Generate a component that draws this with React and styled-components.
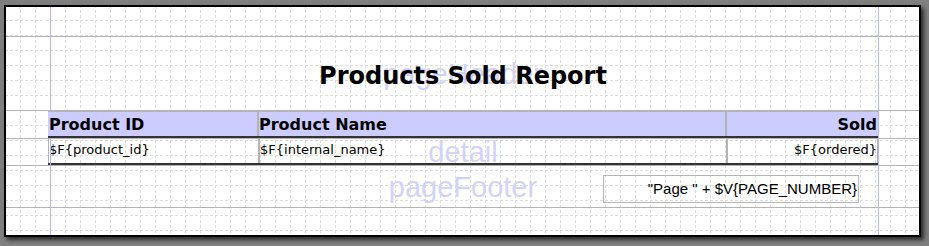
import React from "react";
import styled, { createGlobalStyle } from "styled-components";

const Global = createGlobalStyle`
  html, body { margin: 0; padding: 0; }
  body { background: #7f7f7f; width: 929px; height: 246px; overflow: hidden; }
`;

const gridTile = `url("data:image/svg+xml;utf8,<svg xmlns='http://www.w3.org/2000/svg' width='15' height='15'><path d='M0 0.5H15M0.5 0V15' stroke='%23dcdcdc' stroke-width='1' stroke-dasharray='3 2' fill='none'/></svg>")`;

const Page = styled.div`
  position: relative;
  box-sizing: border-box;
  width: 917px;
  height: 232px;
  margin: 5px 0 0 4px;
  border: 2px solid #000;
  background-color: #fff;
  background-image: ${gridTile};
  background-position: 14px 13px;
  box-shadow: 3px 3px 4px rgba(0, 0, 0, 0.65);
  display: flex;
  flex-direction: column;
  overflow: hidden;
`;

const Guide = styled.div`
  position: absolute;
  top: 0;
  bottom: 0;
  left: ${(p) => p.$x}px;
  width: 1px;
  background: #b4b4ff;
`;

const Band = styled.div`
  display: grid;
  grid-template-rows: minmax(0, 1fr);
  grid-template-columns: minmax(0, 1fr);
  box-sizing: border-box;
  height: ${(p) => (p.$h ? `${p.$h + (p.$last ? 0 : 1)}px` : "auto")};
  flex: ${(p) => (p.$last ? "1 1 auto" : "none")};
  padding: 0 41px 0 42px;
  border-bottom: ${(p) => (p.$last ? "none" : "1px solid #b4b4b4")};
  & > * {
    grid-area: 1 / 1;
  }
`;

const Watermark = styled.div`
  justify-self: center;
  align-self: center;
  font-family: "Liberation Sans", Arial, sans-serif;
  font-size: 29px;
  line-height: 34px;
  color: #d3d3f9;
  white-space: nowrap;
`;

const Title = styled.h1`
  justify-self: center;
  align-self: start;
  margin: 25px 0 0;
  font-family: "DejaVu Sans", sans-serif;
  font-weight: bold;
  font-size: 24px;
  line-height: 28px;
  color: #000;
  white-space: nowrap;
`;

const HeaderRow = styled.div`
  position: relative;
  z-index: 1;
  align-self: stretch;
  display: grid;
  grid-template-columns: 209px 468px 1fr;
  box-sizing: border-box;
  border-top: 1px solid #b4b4b4;
  border-bottom: 2px solid #333;
  background: #ccccff;
`;

const HeaderCell = styled.div`
  box-sizing: border-box;
  border-left: ${(p) => (p.$sep ? "2px solid #b4b4b4" : "none")};
  padding: 2px ${(p) => (p.$right ? "1px" : "0")} 0 ${(p) => (p.$sep ? "0" : "1px")};
  text-align: ${(p) => (p.$right ? "right" : "left")};
  font-family: "DejaVu Sans", sans-serif;
  font-weight: bold;
  font-size: 16px;
  line-height: 22px;
  color: #000;
  white-space: nowrap;
  overflow: hidden;
`;

const DetailRow = styled.div`
  align-self: stretch;
  display: grid;
  grid-template-columns: 211px 468px 151px;
  box-sizing: border-box;
  border-bottom: 2px solid #333;
`;

const DetailCell = styled.div`
  box-sizing: border-box;
  border-left: 1px solid #b4b4b4;
  border-right: 1px solid #b4b4b4;
  text-align: ${(p) => (p.$right ? "right" : "left")};
  font-family: "DejaVu Sans", sans-serif;
  font-size: 13px;
  line-height: 22px;
  color: #000;
  white-space: nowrap;
  overflow: hidden;
`;

const PageNumber = styled.div`
  justify-self: end;
  align-self: start;
  box-sizing: border-box;
  width: 256px;
  height: 28px;
  margin: 9px 19px 0 0;
  padding-right: 1px;
  border: 1px solid #b4b4b4;
  font-family: "Liberation Sans", Arial, sans-serif;
  font-size: 15px;
  line-height: 26px;
  text-align: right;
  color: #000;
  white-space: nowrap;
  overflow: hidden;
`;

export default function App() {
  return (
    <>
      <Global />
      <Page>
        <Guide $x={44} />
        <Guide $x={872} />
        <Band $h={29} />
        <Band $h={73}>
          <Watermark>pageHeader</Watermark>
          <Title>Products Sold Report</Title>
        </Band>
        <Band $h={27}>
          <HeaderRow>
            <HeaderCell>Product ID</HeaderCell>
            <HeaderCell $sep>Product Name</HeaderCell>
            <HeaderCell $sep $right>Sold</HeaderCell>
          </HeaderRow>
        </Band>
        <Band $h={26}>
          <Watermark>detail</Watermark>
          <DetailRow>
            <DetailCell>$F{"{"}product_id{"}"}</DetailCell>
            <DetailCell>$F{"{"}internal_name{"}"}</DetailCell>
            <DetailCell $right>$F{"{"}ordered{"}"}</DetailCell>
          </DetailRow>
        </Band>
        <Band $h={41}>
          <Watermark>pageFooter</Watermark>
          <PageNumber>"Page " + $V{"{"}PAGE_NUMBER{"}"}</PageNumber>
        </Band>
        <Band $last />
      </Page>
    </>
  );
}
